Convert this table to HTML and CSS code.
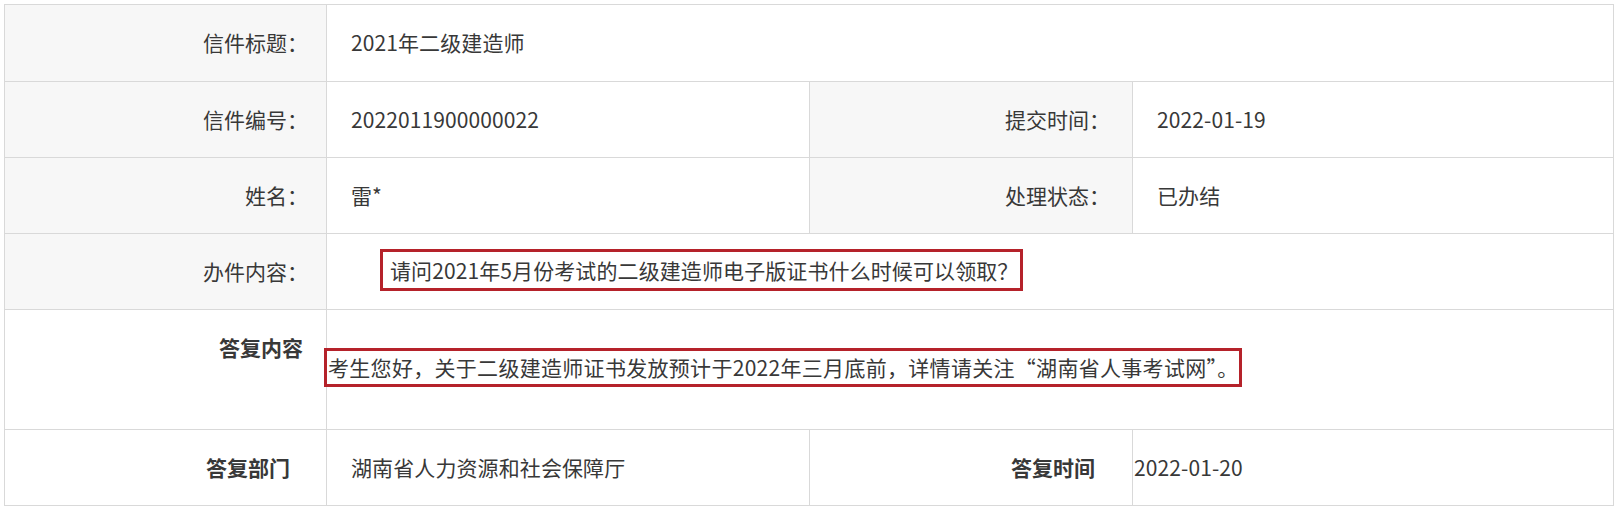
FILE: index.html
```html
<!DOCTYPE html>
<html lang="zh-CN">
<head>
<meta charset="utf-8">
<title>信件详情</title>
<link rel="stylesheet" href="styles.css">
</head>
<body>
<div class="letter">
  <div class="cell label">信件标题：</div>
  <div class="cell value span3">2021年二级建造师</div>

  <div class="cell label">信件编号：</div>
  <div class="cell value">2022011900000022</div>
  <div class="cell label label-mid">提交时间：</div>
  <div class="cell value">2022-01-19</div>

  <div class="cell label">姓名：</div>
  <div class="cell value">雷*</div>
  <div class="cell label label-mid">处理状态：</div>
  <div class="cell value">已办结</div>

  <div class="cell label">办件内容：</div>
  <div class="cell value span3"><span class="mark mark-ask">请问2021年5月份考试的二级建造师电子版证书什么时候可以领取？</span></div>

  <div class="cell label reply-label">答复内容</div>
  <div class="cell value span3 reply-value"><span class="mark mark-reply">考生您好，关于二级建造师证书发放预计于2022年三月底前，详情请关注“湖南省人事考试网”。</span></div>

  <div class="cell label plain bold dept-label">答复部门</div>
  <div class="cell value">湖南省人力资源和社会保障厅</div>
  <div class="cell label plain bold time-label">答复时间</div>
  <div class="cell value tight">2022-01-20</div>
</div>
</body>
</html>
```

FILE: styles.css
```css
* {
  box-sizing: border-box;
}

body {
  margin: 0;
  padding: 4px 0 0 4px;
  background: #ffffff;
  font-family: "Noto Sans CJK SC", "Noto Sans", sans-serif;
  font-size: 21px;
  color: #383838;
}

.letter {
  display: grid;
  grid-template-columns: 322px 483px 323px 481px;
  grid-template-rows: 77px 76px 76px 76px 120px 76px;
  width: 1610px;
  border-top: 1px solid #d9d9d9;
  border-left: 1px solid #d9d9d9;
}

.cell {
  display: flex;
  align-items: center;
  border-right: 1px solid #d9d9d9;
  border-bottom: 1px solid #d9d9d9;
  line-height: 1.5;
  white-space: nowrap;
}

.span3 {
  grid-column: span 3;
}

.label {
  justify-content: flex-end;
  padding-right: 18px;
  background: #f7f7f7;
}

.label-mid {
  padding-right: 22px;
}

.value {
  padding-left: 24px;
  background: #ffffff;
  letter-spacing: 0.1px;
}

.plain {
  background: #ffffff;
}

.bold {
  font-weight: bold;
}

.mark {
  display: inline-block;
  border: 3px solid #b5222a;
  line-height: 33px;
}

.mark-ask {
  margin-left: 29px;
  margin-top: -4px;
  padding: 0 2px 0 7px;
  line-height: 36px;
}

.reply-label {
  align-items: flex-start;
  padding-top: 22px;
  padding-right: 23px;
  background: #ffffff;
  font-weight: bold;
}

.reply-value {
  align-items: flex-start;
  padding-left: 0;
  padding-top: 38px;
}

.mark-reply {
  margin-left: -3px;
  padding: 0 0 0 1px;
  letter-spacing: 0.3px;
}

.dept-label {
  padding-right: 36px;
}

.time-label {
  padding-right: 37px;
}

.tight {
  padding-left: 1px;
}
```
